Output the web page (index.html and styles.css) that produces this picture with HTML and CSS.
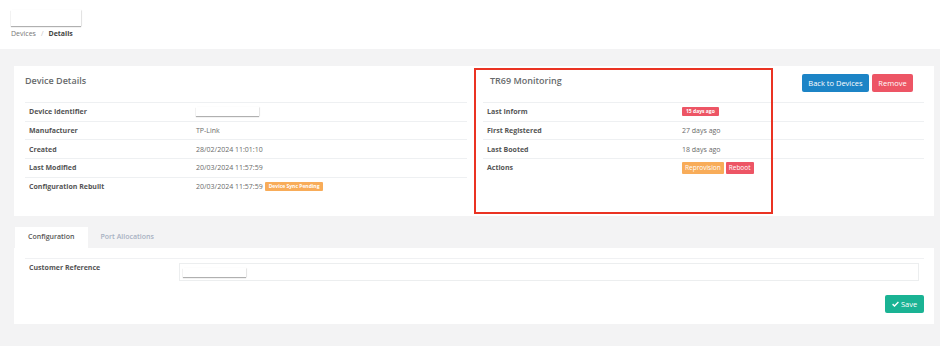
FILE: index.html
```html
<!DOCTYPE html>
<html lang="en">
<head>
  <meta charset="UTF-8" />
  <meta name="viewport" content="width=device-width, initial-scale=1.0"/>
  <title>Device Details</title>
  <link rel="stylesheet" href="styles.css">
</head>
<body>

<header class="topbar">
  <div class="title-blank"></div>
  <div class="breadcrumb">
    <span class="crumb">Devices</span>
    <span class="sep">/</span>
    <strong class="crumb-current">Details</strong>
  </div>
</header>

<div class="page">

  <!-- Device details + TR69 -->
  <section class="card details-card">
    <div class="details-col">
      <div class="col-head">
        <h2 class="col-title">Device Details</h2>
      </div>
      <div class="info-table info-left">
        <div class="info-row"><div class="info-label">Device Identifier</div><div class="info-value"><span class="blank-field"></span></div></div>
        <div class="info-row"><div class="info-label">Manufacturer</div><div class="info-value">TP-Link</div></div>
        <div class="info-row"><div class="info-label">Created</div><div class="info-value">28/02/2024 11:01:10</div></div>
        <div class="info-row"><div class="info-label">Last Modified</div><div class="info-value">20/03/2024 11:57:59</div></div>
        <div class="info-row"><div class="info-label">Configuration Rebuilt</div><div class="info-value">20/03/2024 11:57:59 <span class="badge badge-warning">Device Sync Pending</span></div></div>
      </div>
    </div>

    <div class="details-col">
      <div class="col-head">
        <h2 class="col-title tr69-title">TR69 Monitoring</h2>
        <div class="head-actions">
          <button class="btn btn-blue">Back to Devices</button>
          <button class="btn btn-red">Remove</button>
        </div>
      </div>
      <div class="info-table info-right">
        <div class="info-row"><div class="info-label">Last Inform</div><div class="info-value"><span class="badge badge-danger">15 days ago</span></div></div>
        <div class="info-row"><div class="info-label">First Registered</div><div class="info-value">27 days ago</div></div>
        <div class="info-row"><div class="info-label">Last Booted</div><div class="info-value">18 days ago</div></div>
        <div class="info-row"><div class="info-label">Actions</div><div class="info-value"><button class="btn-xs btn-orange">Reprovision</button><button class="btn-xs btn-red">Reboot</button></div></div>
      </div>
    </div>

    <div class="highlight-box"></div>
  </section>

  <!-- Tabs -->
  <nav class="tabs">
    <div class="tab active">Configuration</div>
    <div class="tab">Port Allocations</div>
  </nav>
  <section class="card config-card">
    <div class="config-row">
      <label class="config-label">Customer Reference</label>
      <div class="config-input"><span class="blank-field"></span></div>
    </div>
    <div class="config-footer">
      <button class="btn btn-green">
        <svg class="check" viewBox="0 0 12 10" width="7" height="6"><path d="M1 5.2 L4.3 8.3 L11 1.6" fill="none" stroke="#fff" stroke-width="2.4"/></svg>
        Save
      </button>
    </div>
  </section>

</div>

</body>
</html>
```

FILE: styles.css
```css
body { font-family: "Open Sans", sans-serif; margin: 0; background: #f3f3f4; color: #676a6c; }

.topbar { background: white; height: 49px; padding: 10px 11px 0; box-sizing: border-box; }
.title-blank {
  width: 70px; height: 16px; background: white;
  box-shadow: 0 1px 1px rgba(0,0,0,0.3), 1px 0 1px rgba(0,0,0,0.06);
}
.breadcrumb { margin-top: 3px; font-size: 7px; line-height: 10px; display: flex; gap: 5px; }
.crumb { color: #777; }
.sep { color: #c4c4c4; }
.crumb-current { color: #444; font-weight: 700; }

.page { padding: 17px 6px 0 14px; }

.card { background: white; }

.details-card {
  position: relative;
  display: grid;
  grid-template-columns: 442px 441px;
  column-gap: 16px;
  padding: 8px 10px 21px 11px;
}
.col-head { height: 28px; display: flex; justify-content: space-between; align-items: flex-start; }
.col-title { margin: 0; font-size: 9px; line-height: 14px; font-weight: 600; color: #676a6c; }
.tr69-title { margin-left: 7px; }
.head-actions { display: flex; gap: 3px; margin-right: 11px; }

.btn {
  border: none; border-radius: 2px; height: 18px; padding: 0 5px;
  font-family: inherit; font-size: 7.5px; color: white; cursor: pointer;
  white-space: nowrap;
}
.btn-blue { background: #1c84c6; width: 67px; }
.btn-red { background: #ed5565; }
.head-actions .btn-red { width: 41px; }
.btn-green { background: #1ab394; width: 39px; padding: 0 4px; display: flex; align-items: center; justify-content: center; gap: 2px; }
.check { display: block; }

.info-row {
  display: grid;
  border-top: 1px solid #eef0f2;
  height: 18.7px;
  box-sizing: border-box;
  align-items: center;
  font-size: 7px;
}
.info-left .info-row { grid-template-columns: 171px 1fr; }
.info-right .info-row { grid-template-columns: 199px 1fr; }
.info-label { padding-left: 4px; font-weight: 700; color: #555; }
.info-value { color: #6a6a6a; display: flex; align-items: center; gap: 2px; white-space: nowrap; }

.blank-field {
  display: block; width: 63px; height: 9px; background: white;
  box-shadow: 0 1px 1px rgba(0,0,0,0.3), 1px 0 1px rgba(0,0,0,0.05);
}

.badge {
  display: inline-block; height: 9px; line-height: 9px; padding: 0 4px;
  font-size: 5px; font-weight: 700; color: white; border-radius: 1px;
}
.badge-warning { background: #f8ac59; }
.badge-danger { background: #ed5565; }

.btn-xs {
  border: none; border-radius: 1px; height: 11.5px; padding: 0 3px;
  font-family: inherit; font-size: 6.5px; color: white; cursor: pointer;
}
.btn-orange { background: #f8ac59; }
.btn-xs.btn-red { background: #ed5565; }

.highlight-box {
  position: absolute; left: 460px; top: 2px; width: 299px; height: 146px;
  box-sizing: border-box; border: 2px solid #ea3323; pointer-events: none;
}

.tabs { display: flex; margin-top: 11px; padding-left: 1px; }
.tab {
  height: 20.5px; line-height: 20.5px; padding: 0 13px;
  font-size: 7px; font-weight: 600; color: #a7b1c2;
}
.tab.active { background: white; color: #555; }

.config-card { padding: 10px 10px 10.5px 11px; }
.config-row {
  display: flex; border-top: 1px solid #f0f1f3;
  padding: 4px 5px 5px 4px;
}
.config-label { width: 150px; font-size: 7px; line-height: 10px; font-weight: 700; color: #555; }
.config-input {
  flex: 1; height: 18.4px; box-sizing: border-box;
  border: 1px solid #eceeef; padding: 4px 0 0 3px;
}
.config-footer { display: flex; justify-content: flex-end; margin-top: 9px; }
```
